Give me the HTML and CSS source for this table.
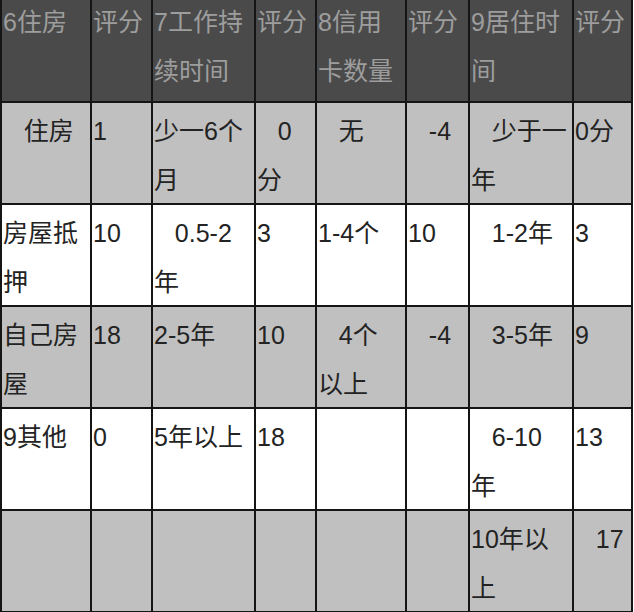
FILE: index.html
```html
<!DOCTYPE html>
<html lang="zh">
<head>
<meta charset="utf-8">
<title>评分表</title>
<link rel="stylesheet" href="styles.css">
</head>
<body>
<div class="table">
  <div class="c h">6住房</div>
  <div class="c h">评分</div>
  <div class="c h">7工作持<br>续时间</div>
  <div class="c h">评分</div>
  <div class="c h">8信用<br>卡数量</div>
  <div class="c h">评分</div>
  <div class="c h">9居住时<br>间</div>
  <div class="c h">评分</div>

  <div class="c g">&nbsp;&nbsp;&nbsp;住房</div>
  <div class="c g">1</div>
  <div class="c g">少一6个<br>月</div>
  <div class="c g">&nbsp;&nbsp;&nbsp;0<br>分</div>
  <div class="c g">&nbsp;&nbsp;&nbsp;无</div>
  <div class="c g">&nbsp;&nbsp;&nbsp;-4</div>
  <div class="c g">&nbsp;&nbsp;&nbsp;少于一<br>年</div>
  <div class="c g">0分</div>

  <div class="c w">房屋抵<br>押</div>
  <div class="c w">10</div>
  <div class="c w">&nbsp;&nbsp;&nbsp;0.5-2<br>年</div>
  <div class="c w">3</div>
  <div class="c w">1-4个</div>
  <div class="c w">10</div>
  <div class="c w">&nbsp;&nbsp;&nbsp;1-2年</div>
  <div class="c w">3</div>

  <div class="c g">自己房<br>屋</div>
  <div class="c g">18</div>
  <div class="c g">2-5年</div>
  <div class="c g">10</div>
  <div class="c g">&nbsp;&nbsp;&nbsp;4个<br>以上</div>
  <div class="c g">&nbsp;&nbsp;&nbsp;-4</div>
  <div class="c g">&nbsp;&nbsp;&nbsp;3-5年</div>
  <div class="c g">9</div>

  <div class="c w">9其他</div>
  <div class="c w">0</div>
  <div class="c w">5年以上</div>
  <div class="c w">18</div>
  <div class="c w"></div>
  <div class="c w"></div>
  <div class="c w">&nbsp;&nbsp;&nbsp;6-10<br>年</div>
  <div class="c w">13</div>

  <div class="c g"></div>
  <div class="c g"></div>
  <div class="c g"></div>
  <div class="c g"></div>
  <div class="c g"></div>
  <div class="c g"></div>
  <div class="c g">10年以<br>上</div>
  <div class="c g">&nbsp;&nbsp;&nbsp;17</div>
</div>
</body>
</html>
```

FILE: styles.css
```css
html, body {
  margin: 0;
  padding: 0;
  background: #ffffff;
  overflow: hidden;
}

.table {
  display: grid;
  grid-template-columns: 88px 59px 101px 59px 88px 61px 102px 57px;
  grid-template-rows: 107px repeat(5, 100px);
  gap: 2px;
  padding: 2px;
  width: max-content;
  margin-top: -8px;
  background: #151515;
  font-family: "Liberation Sans", "Noto Sans CJK SC", sans-serif;
  font-size: 25px;
  line-height: 49px;
  color: #232323;
}

.c {
  padding: 4px 0 0 1px;
  white-space: nowrap;
  overflow: hidden;
}

.h {
  background: #4a4a4a;
  color: #9d9d9d;
}

.g {
  background: #c0c0c0;
}

.w {
  background: #ffffff;
}
```
